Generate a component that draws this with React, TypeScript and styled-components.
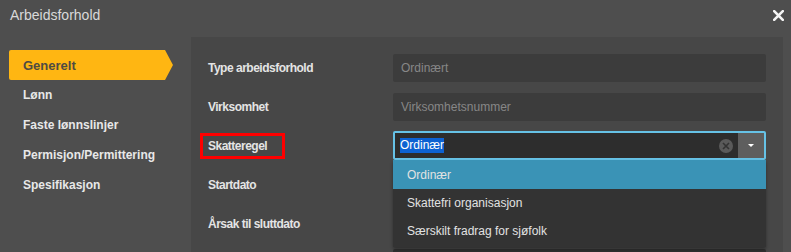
import React from 'react';
import styled, { createGlobalStyle } from 'styled-components';

const GlobalStyle = createGlobalStyle`
  html, body {
    margin: 0;
    padding: 0;
    background: #4e4e4e;
    overflow: hidden;
  }
  body {
    font-family: "Liberation Sans", Arial, sans-serif;
  }
  * {
    box-sizing: border-box;
  }
`;

const navItems = ['Generelt', 'Lønn', 'Faste lønnslinjer', 'Permisjon/Permittering', 'Spesifikasjon'];

const options = ['Ordinær', 'Skattefri organisasjon', 'Særskilt fradrag for sjøfolk'];

const App: React.FC = () => {
  return (
    <>
      <GlobalStyle />
      <Dialog>
        <Header>
          <Title>Arbeidsforhold</Title>
          <CloseButton aria-label="Lukk">
            <svg width="11" height="11" viewBox="0 0 11 11">
              <path d="M1.2 1.2 L9.8 9.8 M9.8 1.2 L1.2 9.8" stroke="#f4f4f4" strokeWidth="2.6" strokeLinecap="square" />
            </svg>
          </CloseButton>
        </Header>

        <Body>
          <Sidebar>
            {navItems.map((item, i) => (
              <NavItem key={item} $active={i === 0}>
                {item}
              </NavItem>
            ))}
          </Sidebar>

          <Panel>
            <Row>
              <Label>Type arbeidsforhold</Label>
              <Field>Ordinært</Field>
            </Row>
            <Row>
              <Label>Virksomhet</Label>
              <Field>Virksomhetsnummer</Field>
            </Row>
            <Row>
              <Label $marked>Skatteregel</Label>
              <SelectWrap>
                <Select>
                  <SelectValue>
                    <Selected>Ordinær</Selected>
                  </SelectValue>
                  <ClearIcon>
                    <svg width="8" height="8" viewBox="0 0 8 8">
                      <path d="M1 1 L7 7 M7 1 L1 7" stroke="#333333" strokeWidth="1.6" />
                    </svg>
                  </ClearIcon>
                  <ArrowButton>
                    <Caret />
                  </ArrowButton>
                </Select>
                <Menu>
                  {options.map((opt, i) => (
                    <Option key={opt} $highlighted={i === 0}>
                      {opt}
                    </Option>
                  ))}
                </Menu>
              </SelectWrap>
            </Row>
            <Row>
              <Label>Startdato</Label>
              <Field />
            </Row>
            <Row>
              <Label>Årsak til sluttdato</Label>
              <Field />
            </Row>
            <Row>
              <Label />
              <Field $dark />
            </Row>
          </Panel>
        </Body>
      </Dialog>
    </>
  );
};

const Dialog = styled.div`
  width: 791px;
  height: 252px;
  display: flex;
  flex-direction: column;
  background: #4e4e4e;
  overflow: hidden;
`;

const Header = styled.div`
  height: 37px;
  flex-shrink: 0;
  display: flex;
  align-items: flex-start;
  justify-content: space-between;
  padding: 7px 7px 0 10px;
`;

const Title = styled.div`
  font-size: 14px;
  line-height: 16px;
  color: #d9d9d9;
`;

const CloseButton = styled.div`
  width: 11px;
  height: 11px;
  margin-top: 3px;
  display: flex;
`;

const Body = styled.div`
  flex: 1;
  display: flex;
  min-height: 0;
`;

const Sidebar = styled.div`
  width: 191px;
  flex-shrink: 0;
  padding: 13px 0 0 9px;
  display: flex;
  flex-direction: column;
`;

const NavItem = styled.div<{ $active?: boolean }>`
  height: 30px;
  display: flex;
  align-items: center;
  padding-left: 14px;
  font-size: ${(p) => (p.$active ? '13px' : '12px')};
  font-weight: bold;
  color: ${(p) => (p.$active ? '#4f4b43' : '#e8e8e8')};
  width: ${(p) => (p.$active ? '164px' : 'auto')};
  background: ${(p) => (p.$active ? '#ffb612' : 'transparent')};
  border-radius: 2px 0 0 2px;
  clip-path: ${(p) =>
    p.$active ? 'polygon(0 0, calc(100% - 8px) 0, 100% 50%, calc(100% - 8px) 100%, 0 100%)' : 'none'};
`;

const Panel = styled.div`
  flex: 1;
  margin-right: 8px;
  background: #474747;
  padding: 17px 17px 0 17px;
  display: flex;
  flex-direction: column;
  gap: 11px;
`;

const Row = styled.div`
  display: grid;
  grid-template-columns: 185px 1fr;
  align-items: center;
  height: 28px;
  flex-shrink: 0;
`;

const Label = styled.div<{ $marked?: boolean }>`
  justify-self: start;
  font-size: 12px;
  font-weight: bold;
  letter-spacing: -0.5px;
  color: #e4e4e4;
  ${(p) =>
    p.$marked &&
    `
    display: flex;
    align-items: center;
    height: 26px;
    margin-left: -8px;
    padding: 0 15px 0 5px;
    border: 3px solid #ff0000;
  `}
`;

const Field = styled.div<{ $dark?: boolean }>`
  height: 28px;
  display: flex;
  align-items: center;
  padding: 0 8px;
  border-radius: 2px;
  background: ${(p) => (p.$dark ? '#2f2f2f' : '#3c3c3c')};
  font-size: 12px;
  color: #878787;
`;

const SelectWrap = styled.div`
  position: relative;
  height: 28px;
`;

const Select = styled.div`
  height: 29px;
  margin-top: -1px;
  display: flex;
  align-items: center;
  border: 2px solid #66c2e6;
  border-radius: 2px;
  background: #2d2d2d;
`;

const SelectValue = styled.div`
  flex: 1;
  padding-left: 5px;
  font-size: 12px;
  color: #ffffff;
  display: flex;
  align-items: center;
`;

const Selected = styled.span`
  background: #0d62d2;
  line-height: 15px;
`;

const ClearIcon = styled.div`
  width: 14px;
  height: 14px;
  border-radius: 50%;
  background: #5a5a5a;
  display: flex;
  align-items: center;
  justify-content: center;
  margin-right: 5px;
`;

const ArrowButton = styled.div`
  width: 26px;
  height: 100%;
  background: #5e5e5e;
  display: flex;
  align-items: center;
  justify-content: center;
`;

const Caret = styled.div`
  width: 0;
  height: 0;
  border-left: 3px solid transparent;
  border-right: 3px solid transparent;
  border-top: 3px solid #ffffff;
`;

const Menu = styled.div`
  position: absolute;
  top: 28px;
  left: 0;
  right: 0;
  z-index: 10;
  background: #333333;
  padding-bottom: 2px;
  box-shadow: 0 2px 3px rgba(0, 0, 0, 0.35);
`;

const Option = styled.div<{ $highlighted?: boolean }>`
  height: ${(p) => (p.$highlighted ? '29px' : '28px')};
  display: flex;
  align-items: center;
  padding-left: 14px;
  font-size: 12px;
  color: #e2e2e2;
  background: ${(p) => (p.$highlighted ? '#3a93b6' : 'transparent')};
`;

export default App;
